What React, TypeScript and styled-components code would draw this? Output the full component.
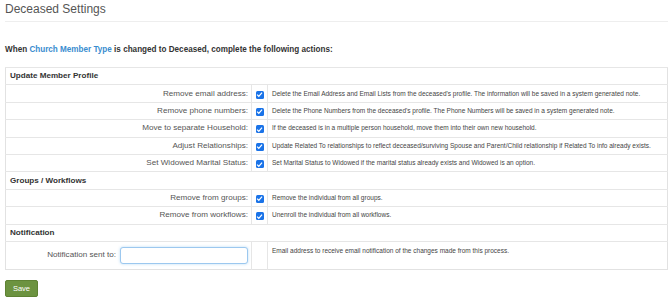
import styled, { createGlobalStyle } from "styled-components";

const GlobalStyle = createGlobalStyle`
  body {
    margin: 0;
    background: #ffffff;
    font-family: "Liberation Sans", Arial, sans-serif;
    color: #555555;
  }
`;

type ActionRow = { label: string; note: string };

const profileRows: ActionRow[] = [
  {
    label: "Remove email address:",
    note: "Delete the Email Address and Email Lists from the deceased's profile. The information will be saved in a system generated note.",
  },
  {
    label: "Remove phone numbers:",
    note: "Delete the Phone Numbers from the deceased's profile. The Phone Numbers will be saved in a system generated note.",
  },
  {
    label: "Move to separate Household:",
    note: "If the deceased is in a multiple person household, move them into their own new household.",
  },
  {
    label: "Adjust Relationships:",
    note: "Update Related To relationships to reflect deceased/surviving Spouse and Parent/Child relationship if Related To info already exists.",
  },
  {
    label: "Set Widowed Marital Status:",
    note: "Set Marital Status to Widowed if the marital status already exists and Widowed is an option.",
  },
];

const groupRows: ActionRow[] = [
  { label: "Remove from groups:", note: "Remove the individual from all groups." },
  { label: "Remove from workflows:", note: "Unenroll the individual from all workflows." },
];

function CheckBox() {
  return (
    <Box>
      <svg width="7" height="7" viewBox="0 0 10 10">
        <path d="M1.5 5.2 L4 7.6 L8.6 2.4" fill="none" stroke="#ffffff" strokeWidth="1.8" />
      </svg>
    </Box>
  );
}

function ActionRows({ rows }: { rows: ActionRow[] }) {
  return (
    <>
      {rows.map((r) => (
        <Row key={r.label}>
          <LabelCell>{r.label}</LabelCell>
          <CheckCell>
            <CheckBox />
          </CheckCell>
          <NoteCell>{r.note}</NoteCell>
        </Row>
      ))}
    </>
  );
}

export default function App() {
  return (
    <Page>
      <GlobalStyle />
      <Title>Deceased Settings</Title>
      <Intro>
        When <Link>Church Member Type</Link> is changed to Deceased, complete the following actions:
      </Intro>
      <Table>
        <colgroup>
          <col style={{ width: 246 }} />
          <col style={{ width: 16 }} />
          <col />
        </colgroup>
        <tbody>
          <Row>
            <SectionCell colSpan={3}>Update Member Profile</SectionCell>
          </Row>
          <ActionRows rows={profileRows} />
          <Row>
            <SectionCell colSpan={3}>Groups / Workflows</SectionCell>
          </Row>
          <ActionRows rows={groupRows} />
          <Row>
            <SectionCell colSpan={3}>Notification</SectionCell>
          </Row>
          <Row $tall>
            <LabelCell>
              <InputLine>
                Notification sent to:
                <EmailInput type="text" />
              </InputLine>
            </LabelCell>
            <CheckCell />
            <NoteCell $top>Email address to receive email notification of the changes made from this process.</NoteCell>
          </Row>
        </tbody>
      </Table>
      <SaveButton>Save</SaveButton>
    </Page>
  );
}

const Page = styled.div`
  padding: 0 2px 0 5px;
`;

const Title = styled.h1`
  margin: 0;
  padding: 2px 0 5px;
  font-size: 12px;
  line-height: 14px;
  font-weight: normal;
  color: #555555;
  border-bottom: 1px solid #eeeeee;
`;

const Intro = styled.p`
  margin: 23px 0 12px;
  font-size: 8.15px;
  line-height: 10px;
  font-weight: bold;
  color: #333333;
`;

const Link = styled.span`
  color: #3a8dcf;
`;

const Table = styled.table`
  width: 663px;
  border-collapse: collapse;
  table-layout: fixed;
  border: 1px solid #e2e2e2;
`;

const Row = styled.tr<{ $tall?: boolean }>`
  height: ${(p) => (p.$tall ? "28px" : "17.4px")};
  border-top: 1px solid #e6e6e6;
  line-height: 10px;
`;

const SectionCell = styled.td`
  padding: 0 0 0 4px;
  font-size: 8.1px;
  font-weight: bold;
  color: #333333;
`;

const LabelCell = styled.td`
  padding: 0 3px 0 0;
  text-align: right;
  font-size: 8.1px;
  color: #555555;
  vertical-align: middle;
`;

const CheckCell = styled.td`
  padding: 0;
  font-size: 0;
  line-height: 0;
  border-left: 1px solid #e6e6e6;
  border-right: 1px solid #e6e6e6;
  text-align: center;
  vertical-align: middle;
`;

const NoteCell = styled.td<{ $top?: boolean }>`
  padding: ${(p) => (p.$top ? "4px 0 0 4px" : "0 0 0 4px")};
  font-size: 6.5px;
  color: #444444;
  vertical-align: ${(p) => (p.$top ? "top" : "middle")};
  white-space: nowrap;
`;

const Box = styled.span`
  display: inline-flex;
  align-items: center;
  justify-content: center;
  width: 8px;
  height: 8px;
  margin-top: 2px;
  border-radius: 1.5px;
  background: #1a73e8;
`;

const InputLine = styled.div`
  display: flex;
  align-items: center;
  justify-content: flex-end;
  gap: 4px;
`;

const EmailInput = styled.input`
  box-sizing: border-box;
  width: 128px;
  height: 17px;
  margin: 0;
  border: 1px solid #9cc8ef;
  border-radius: 3px;
  box-shadow: 0 0 3px rgba(102, 175, 233, 0.45);
  outline: none;
`;

const SaveButton = styled.button`
  display: block;
  margin-top: 10px;
  width: 33px;
  height: 17px;
  padding: 0;
  border: 1px solid #5e8233;
  border-radius: 2px;
  background: #6c9340;
  color: #ffffff;
  font-family: "Liberation Sans", Arial, sans-serif;
  font-size: 7.5px;
`;
